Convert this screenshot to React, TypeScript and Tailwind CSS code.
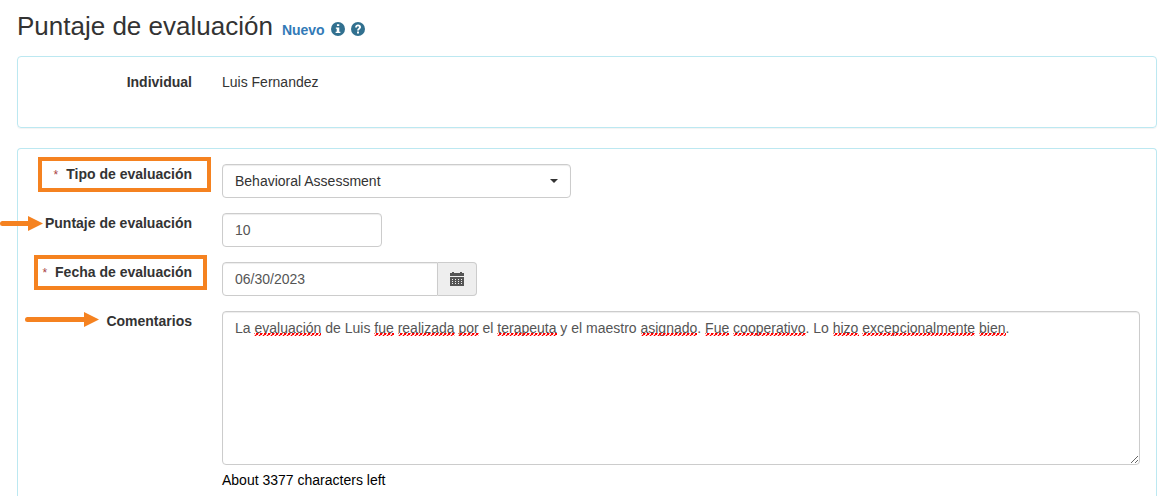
import clsx from "clsx";
import { useState, type ReactNode } from "react";

const CONTROL =
  "h-[34px] border border-[#ccc] bg-white px-3 text-sm shadow-[inset_0_1px_1px_rgba(0,0,0,0.075)] outline-none focus:border-[#66afe9]";

const LABEL_COLUMN = "w-[189px] shrink-0 px-[15px] text-right";
const VALUE_COLUMN = "min-w-0 flex-1 pr-4 pl-[15px]";

const MAX_COMMENT = 3500;
const INITIAL_COMMENT =
  "La evaluación de Luis fue realizada por el terapeuta y el maestro asignado. Fue cooperativo. Lo hizo excepcionalmente bien.";

// words the spell checker does not know
const UNKNOWN_WORDS = new Set([
  "evaluación",
  "fue",
  "realizada",
  "por",
  "terapeuta",
  "asignado",
  "Fue",
  "cooperativo",
  "hizo",
  "excepcionalmente",
  "bien",
]);

export default function App() {
  return (
    <main className="pr-[14px] pl-[17px] font-['Liberation_Sans',Arial,sans-serif] text-sm text-[#333]">
      <header className="flex items-baseline pt-2 pb-3">
        <h1 className="text-[26px] leading-9">Puntaje de evaluación</h1>
        <span className="ml-[9px] font-bold text-[#337ab7]">Nuevo</span>
        <button type="button" aria-label="Información" className="ml-1.5 self-center pt-1.5">
          <InfoIcon />
        </button>
        <button type="button" aria-label="Ayuda" className="ml-1.5 self-center pt-1.5">
          <HelpIcon />
        </button>
      </header>

      <section className="rounded border border-[#bce8f1] pt-[15px] pb-[35px] shadow-[0_1px_1px_rgba(0,0,0,0.05)]">
        <dl className="flex">
          <dt className={clsx(LABEL_COLUMN, "font-bold")}>Individual</dt>
          <dd className={VALUE_COLUMN}>Luis Fernandez</dd>
        </dl>
      </section>

      <AssessmentForm />
    </main>
  );
}

function AssessmentForm() {
  const [type, setType] = useState("Behavioral Assessment");
  const [score, setScore] = useState("10");
  const [date, setDate] = useState("06/30/2023");
  const [comment, setComment] = useState(INITIAL_COMMENT);

  return (
    <form className="mt-5 flex flex-col gap-[15px] rounded-t border border-b-0 border-[#bce8f1] pt-[15px] pb-1.5">
      <Field
        id="type"
        label="Tipo de evaluación"
        required
        mark={<Highlight className="-right-1 left-5" />}
      >
        <div className="relative w-[349px] max-w-full">
          <select
            id="type"
            value={type}
            onChange={(e) => setType(e.target.value)}
            className={clsx(CONTROL, "w-full appearance-none rounded text-[#333]")}
          >
            <option>Behavioral Assessment</option>
          </select>
          <span
            aria-hidden
            className="pointer-events-none absolute top-[15px] right-[13px] border-x-4 border-t-4 border-x-transparent border-t-[#333]"
          />
        </div>
      </Field>

      <Field
        id="score"
        label="Puntaje de evaluación"
        mark={<Arrow length={43} className="top-0.5 -left-[18px]" />}
      >
        <input
          id="score"
          type="text"
          value={score}
          onChange={(e) => setScore(e.target.value)}
          className={clsx(CONTROL, "block w-40 rounded text-[#555]")}
        />
      </Field>

      <Field
        id="date"
        label="Fecha de evaluación"
        required
        mark={<Highlight className="right-0 left-4" />}
      >
        <div className="flex w-[255px] max-w-full">
          <input
            id="date"
            type="text"
            value={date}
            onChange={(e) => setDate(e.target.value)}
            className={clsx(CONTROL, "min-w-0 flex-1 rounded-l text-[#555]")}
          />
          <button
            type="button"
            aria-label="Abrir calendario"
            className="grid w-[39px] place-items-center rounded-r border border-l-0 border-[#ccc] bg-[#eee] text-[#555]"
          >
            <CalendarIcon />
          </button>
        </div>
      </Field>

      <Field
        id="comment"
        label="Comentarios"
        mark={<Arrow length={74} className="top-0 left-[7px]" />}
      >
        <div className="relative">
          <textarea
            id="comment"
            spellCheck={false}
            value={comment}
            onChange={(e) => setComment(e.target.value)}
            className={clsx(CONTROL, "block h-[154px] w-full resize-y rounded py-1.5 text-[#555]")}
          />
          <SpellingMarks text={comment} />
        </div>
        <p className="pt-[5px] text-black">
          About {MAX_COMMENT - comment.length} characters left
        </p>
      </Field>
    </form>
  );
}

interface FieldProps {
  id: string;
  label: string;
  required?: boolean;
  /** Orange callout drawn over the label column. */
  mark: ReactNode;
  children: ReactNode;
}

function Field({ id, label, required, mark, children }: FieldProps) {
  return (
    <div className="flex">
      <div className={clsx(LABEL_COLUMN, "relative whitespace-nowrap")}>
        {required ? <span className="mr-2 text-xs text-[#a94442]">*</span> : null}
        <label htmlFor={id} className="font-bold">
          {label}
        </label>
        {mark}
      </div>
      <div className={VALUE_COLUMN}>{children}</div>
    </div>
  );
}

// Mirrors the textarea's wrapping so the underlines sit below its words.
function SpellingMarks({ text }: { text: string }) {
  return (
    <div
      aria-hidden
      className="pointer-events-none absolute inset-0 overflow-hidden border border-transparent px-3 py-1.5 whitespace-pre-wrap text-transparent"
    >
      {text.split(/([\s.]+)/).map((word, i) =>
        UNKNOWN_WORDS.has(word) ? (
          <span
            key={i}
            className="bg-[linear-gradient(45deg,transparent_60%,#f00_70%,#f00_85%,transparent_95%),linear-gradient(135deg,#f00_10%,transparent_20%),linear-gradient(135deg,transparent_40%,#f00_50%,#f00_65%,transparent_75%)] bg-[length:4px_3px] bg-bottom-left bg-repeat-x"
          >
            {word}
          </span>
        ) : (
          word
        ),
      )}
    </div>
  );
}

function Highlight({ className }: { className: string }) {
  return (
    <span
      aria-hidden
      className={clsx(
        "pointer-events-none absolute -top-[7px] h-[35px] border-4 border-[#f58220]",
        className,
      )}
    />
  );
}

function Arrow({ length, className }: { length: number; className: string }) {
  return (
    <svg
      aria-hidden
      width={length}
      height="16"
      className={clsx("pointer-events-none absolute", className)}
    >
      <path d={`M2.5 8.5H${length - 12}`} stroke="#f58220" strokeWidth="5" strokeLinecap="round" />
      <path d={`M${length - 15} 1L${length} 8.5L${length - 15} 16Z`} fill="#f58220" />
    </svg>
  );
}

function InfoIcon() {
  return (
    <svg width="14" height="14" viewBox="0 0 13 13" className="block">
      <circle cx="6.5" cy="6.5" r="6.5" fill="#31708f" />
      <path d="M5.5 2h2.2v1.7H5.5zM4.5 5h3.2v4h1v1.3H4.3V9h1V6.2h-.8z" fill="#fff" />
    </svg>
  );
}

function HelpIcon() {
  return (
    <svg width="14" height="14" viewBox="0 0 13 13" className="block">
      <circle cx="6.5" cy="6.5" r="6.5" fill="#31708f" />
      <path
        d="M3.8 5.2C3.8 3.3 5 2.3 6.6 2.3S9.3 3.3 9.3 4.8C9.3 6.4 7.4 6.5 7.4 8H5.6C5.6 6 7.4 5.8 7.4 4.8 7.4 4.3 7.1 4 6.5 4S5.6 4.4 5.6 5.2zM5.6 8.8h1.8v1.8H5.6z"
        fill="#fff"
      />
    </svg>
  );
}

function CalendarIcon() {
  return (
    <svg width="14" height="14" viewBox="0 0 14 14" fill="currentColor" shapeRendering="crispEdges">
      <path d="M0 1h2V0h2v1h6V0h2v1h2v3H0z" />
      <path
        fillRule="evenodd"
        d="M0 5h14v9H0zM2 7v1h1V7zm3 0v1h1V7zm3 0v1h1V7zm3 0v1h1V7zM2 9v1h1V9zm3 0v1h1V9zm3 0v1h1V9zm3 0v1h1V9zM2 11v1h1v-1zm3 0v1h1v-1zm3 0v1h1v-1zm3 0v1h1v-1z"
      />
    </svg>
  );
}
